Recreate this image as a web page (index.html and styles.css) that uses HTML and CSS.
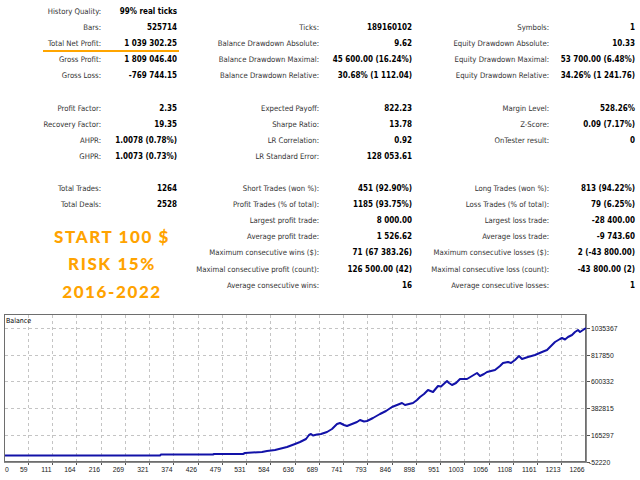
FILE: index.html
```html
<!DOCTYPE html>
<html>
<head>
<meta charset="utf-8">
<link rel="stylesheet" href="styles.css">
</head>
<body>
<div class="stats">
  <span class="lbl">History Quality:</span><span class="val">99% real ticks</span><span></span><span></span><span></span><span></span>
  <span class="lbl">Bars:</span><span class="val">525714</span><span class="lbl">Ticks:</span><span class="val">189160102</span><span class="lbl">Symbols:</span><span class="val">1</span>
  <span class="lbl mark">Total Net Profit:</span><span class="val">1 039 302.25</span><span class="lbl">Balance Drawdown Absolute:</span><span class="val">9.62</span><span class="lbl">Equity Drawdown Absolute:</span><span class="val">10.33</span>
  <span class="lbl">Gross Profit:</span><span class="val">1 809 046.40</span><span class="lbl">Balance Drawdown Maximal:</span><span class="val">45 600.00 (16.24%)</span><span class="lbl">Equity Drawdown Maximal:</span><span class="val">53 700.00 (6.48%)</span>
  <span class="lbl">Gross Loss:</span><span class="val">-769 744.15</span><span class="lbl">Balance Drawdown Relative:</span><span class="val">30.68% (1 112.04)</span><span class="lbl">Equity Drawdown Relative:</span><span class="val">34.26% (1 241.76)</span>
  <div class="blank"></div>
  <span class="lbl">Profit Factor:</span><span class="val">2.35</span><span class="lbl">Expected Payoff:</span><span class="val">822.23</span><span class="lbl">Margin Level:</span><span class="val">528.26%</span>
  <span class="lbl">Recovery Factor:</span><span class="val">19.35</span><span class="lbl">Sharpe Ratio:</span><span class="val">13.78</span><span class="lbl">Z-Score:</span><span class="val">0.09 (7.17%)</span>
  <span class="lbl">AHPR:</span><span class="val">1.0078 (0.78%)</span><span class="lbl">LR Correlation:</span><span class="val">0.92</span><span class="lbl">OnTester result:</span><span class="val">0</span>
  <span class="lbl">GHPR:</span><span class="val">1.0073 (0.73%)</span><span class="lbl">LR Standard Error:</span><span class="val">128 053.61</span><span></span><span></span>
  <div class="blank"></div>
  <span class="lbl">Total Trades:</span><span class="val">1264</span><span class="lbl">Short Trades (won %):</span><span class="val">451 (92.90%)</span><span class="lbl">Long Trades (won %):</span><span class="val">813 (94.22%)</span>
  <span class="lbl">Total Deals:</span><span class="val">2528</span><span class="lbl">Profit Trades (% of total):</span><span class="val">1185 (93.75%)</span><span class="lbl">Loss Trades (% of total):</span><span class="val">79 (6.25%)</span>
  <span class="lbl">Largest profit trade:</span><span class="val">8 000.00</span><span class="lbl">Largest loss trade:</span><span class="val">-28 400.00</span>
  <span class="lbl">Average profit trade:</span><span class="val">1 526.62</span><span class="lbl">Average loss trade:</span><span class="val">-9 743.60</span>
  <span class="lbl">Maximum consecutive wins ($):</span><span class="val">71 (67 383.26)</span><span class="lbl">Maximum consecutive losses ($):</span><span class="val">2 (-43 800.00)</span>
  <span class="lbl">Maximal consecutive profit (count):</span><span class="val">126 500.00 (42)</span><span class="lbl">Maximal consecutive loss (count):</span><span class="val">-43 800.00 (2)</span>
  <span class="lbl">Average consecutive wins:</span><span class="val">16</span><span class="lbl">Average consecutive losses:</span><span class="val">1</span>
  <div class="promo">
    <div>START 100 $</div>
    <div>RISK 15%</div>
    <div>2016-2022</div>
  </div>
</div>
<svg class="chart" width="640" height="180" viewBox="0 300 640 180">
  <rect x="0" y="300" width="640" height="180" fill="#fff"/>
  <path class="grid" d="M28.5 315V461M52.5 315V461M76.5 315V461M101.5 315V461M125.5 315V461M149.5 315V461M173.5 315V461M198.5 315V461M222.5 315V461M246.5 315V461M270.5 315V461M295.5 315V461M319.5 315V461M343.5 315V461M367.5 315V461M392.5 315V461M416.5 315V461M440.5 315V461M464.5 315V461M489.5 315V461M513.5 315V461M537.5 315V461M561.5 315V461M5 328.5H585M5 355.5H585M5 381.5H585M5 408.5H585M5 435.5H585"/>
  <rect class="frame" x="4.5" y="314.5" width="581" height="147"/>
  <path class="frame2" d="M586.5 314V463M4 462.5H587"/>
  <path class="ticks" d="M587 328.5H590M587 355.5H590M587 381.5H590M587 408.5H590M587 435.5H590M587 462.5H590M28.5 463V465M52.5 463V465M76.5 463V465M101.5 463V465M125.5 463V465M149.5 463V465M173.5 463V465M198.5 463V465M222.5 463V465M246.5 463V465M270.5 463V465M295.5 463V465M319.5 463V465M343.5 463V465M367.5 463V465M392.5 463V465M416.5 463V465M440.5 463V465M464.5 463V465M489.5 463V465M513.5 463V465M537.5 463V465M561.5 463V465"/>
  <text class="title" x="6" y="322.5">Balance</text>
  <polyline class="line" points="5,455.5 160,455.5 161,454.5 213,454.5 214,454 243,454 245,453 262,452 267,451 275,450 287,447 295,444 300,442 306,439 309,435 311,434 313,435.5 317,434.5 321,434 327,432 332,429 337,424 340,423 344,425 347,426 352,424 357,422 360,420 364,421.5 367,421 373,418 380,414 386,411 392,407 397,405 402,403 405,405 409,404 413,403 417,400 420,397 424,394 428,390 433,392 438,386 441,386.5 447,381 449,383 452,385 456,383 460,379 467,379 472,376 477,373 480,376 484,374 487,372 495,370 500,366 503,363 508,362 511,363 515,360 519,356 522,359 525,358 528,357 535,355 542,352 547,350 551,346 555,342 560,339 562,338 565,339.5 568,337 572,335 575,332 578,330 580,332 583,330 586,328"/>
  <g class="ylab">
    <text x="591" y="331">1035367</text>
    <text x="591" y="358">817850</text>
    <text x="591" y="384">600332</text>
    <text x="591" y="411">382815</text>
    <text x="591" y="438">165297</text>
    <text x="589" y="465">-52220</text>
  </g>
  <g class="xlab">
    <text x="5" y="471.5" class="start">0</text>
    <text x="27.5" y="471.5">59</text>
    <text x="51.5" y="471.5">111</text>
    <text x="75.5" y="471.5">164</text>
    <text x="100" y="471.5">216</text>
    <text x="124" y="471.5">269</text>
    <text x="148.5" y="471.5">321</text>
    <text x="172.5" y="471.5">374</text>
    <text x="197" y="471.5">426</text>
    <text x="221" y="471.5">479</text>
    <text x="245.5" y="471.5">531</text>
    <text x="269.5" y="471.5">584</text>
    <text x="294" y="471.5">636</text>
    <text x="318" y="471.5">689</text>
    <text x="342.5" y="471.5">741</text>
    <text x="366.5" y="471.5">793</text>
    <text x="391" y="471.5">846</text>
    <text x="415" y="471.5">898</text>
    <text x="439.5" y="471.5">951</text>
    <text x="463.5" y="471.5">1003</text>
    <text x="488" y="471.5">1056</text>
    <text x="512" y="471.5">1108</text>
    <text x="536.5" y="471.5">1161</text>
    <text x="560.5" y="471.5">1213</text>
    <text x="584.5" y="471.5">1266</text>
  </g>
</svg>
</body>
</html>
```

FILE: styles.css
```css
html, body {
  margin: 0;
  padding: 0;
  background: #fff;
}
body {
  width: 640px;
  height: 480px;
  overflow: hidden;
  font-family: "DejaVu Sans Condensed", "DejaVu Sans", sans-serif;
  font-stretch: condensed;
}
.stats {
  display: grid;
  grid-template-columns: 101px 76px 142px 93px 137px 86px;
  grid-auto-rows: 16.1px;
  padding-top: 4px;
  height: 290px;
}
.stats > span {
  white-space: nowrap;
  line-height: 16.1px;
  text-align: right;
}
.lbl {
  font-size: 7.7px;
  color: #333;
}
.val {
  font-size: 8px;
  font-weight: bold;
  color: #000;
}
.mark {
  position: relative;
}
.mark::after {
  content: "";
  position: absolute;
  left: 43px;
  width: 136px;
  bottom: 0;
  height: 2px;
  background: #ffa500;
}
.blank {
  grid-column: 1 / -1;
}
.promo {
  grid-column: 1 / 3;
  grid-row: 14 / 19;
  display: flex;
  flex-direction: column;
  align-items: center;
  padding-top: 9.5px;
  padding-left: 47px;
  font-family: "Lato", "Roboto", sans-serif;
  font-weight: 900;
  font-size: 17px;
  letter-spacing: 1.6px;
  line-height: 27.5px;
  color: #ffa300;
  white-space: nowrap;
}
.chart {
  display: block;
  margin-top: 6px;
}
.grid {
  fill: none;
  stroke: #c4c4c4;
  stroke-width: 1;
  stroke-dasharray: 3 3;
}
.frame {
  fill: none;
  stroke: #6e6e6e;
  stroke-width: 1;
}
.frame2 {
  fill: none;
  stroke: #8a8a8a;
  stroke-width: 1;
}
.ticks {
  fill: none;
  stroke: #555;
  stroke-width: 1;
}
.line {
  fill: none;
  stroke: #1212a8;
  stroke-width: 2;
  stroke-linejoin: round;
}
.title {
  font-family: "DejaVu Sans Condensed", "DejaVu Sans", sans-serif;
  font-size: 7px;
  fill: #000;
}
.ylab text, .xlab text {
  font-family: "Liberation Sans", Arial, sans-serif;
  font-size: 6.8px;
  fill: #1a1a1a;
}
.xlab text {
  text-anchor: end;
}
.xlab text.start {
  text-anchor: start;
}
```
